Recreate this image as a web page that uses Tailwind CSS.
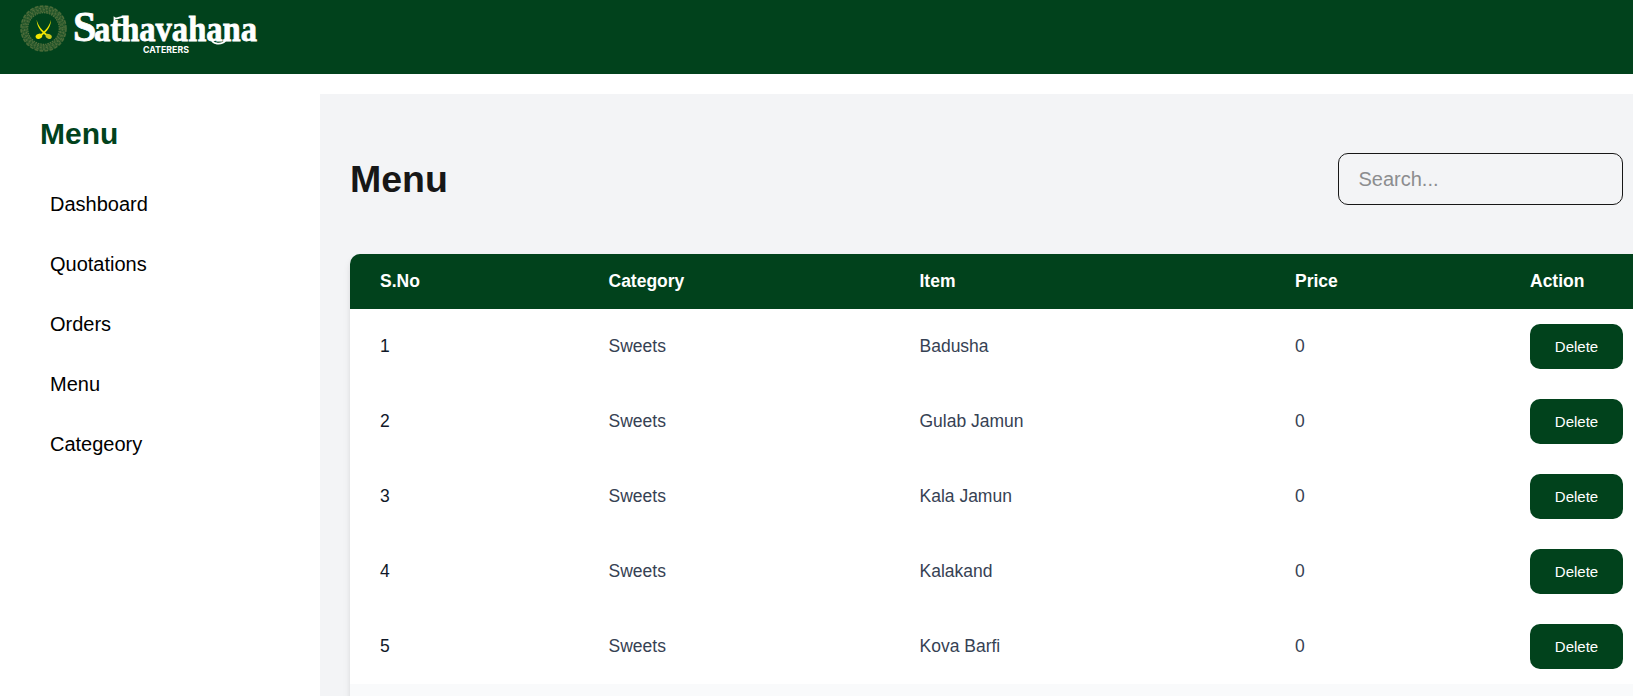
<!DOCTYPE html>
<html lang="en">
<head>
<meta charset="utf-8">
<title>Sathavahana Caterers</title>
<script src="https://cdn.jsdelivr.net/npm/@tailwindcss/browser@4"></script>
</head>
<body class="h-[696px] overflow-hidden bg-white font-['Liberation_Sans',Arial,sans-serif] text-black">
<header class="h-[74px] bg-[#01421c]">
  <svg class="block" width="280" height="74" viewBox="0 0 280 74" aria-label="Sathavahana Caterers">
    <g fill="none" stroke="#78854b">
      <circle cx="43.5" cy="28.5" r="22.6" stroke-width="1.5" stroke-dasharray="3.6 1.5" opacity=".55"/>
      <circle cx="43.5" cy="28.5" r="20.6" stroke-width="1.3" stroke-dasharray="1.3 1.9 2.4 1.2" opacity=".5"/>
      <circle cx="43.5" cy="28.5" r="19" stroke-width="1.3" stroke-dasharray="2.2 1.4 1 1.7" opacity=".5"/>
      <circle cx="43.5" cy="28.5" r="17.4" stroke-width="1.3" stroke-dasharray="1.2 1.6 2 1" opacity=".5"/>
      <circle cx="43.5" cy="28.5" r="19.4" stroke-width="6.6" opacity=".3"/>
      <circle cx="43.5" cy="28.5" r="15.8" stroke-width="1.2" stroke-dasharray="1.6 .8" opacity=".7"/>
    </g>
    <g fill="#f2e600">
      <path d="M36.7 19.8C38 26 42 30.5 48.2 35L46.8 36.3C40.5 31.5 36.8 26.5 36.7 19.8Z"/>
      <path d="M51 19.8C49.7 26 45.7 30.5 39.8 35L41.2 36.3C47.3 31.5 50.9 26.5 51 19.8Z"/>
      <ellipse cx="38.9" cy="36.3" rx="3.4" ry="2.5" transform="rotate(-18 38.9 36.3)"/>
      <ellipse cx="48.7" cy="36.3" rx="3.2" ry="2.3" transform="rotate(25 48.7 36.3)" fill="#c9c81a"/>
    </g>
    <g fill="#fff">
      <text y="40.5" font-family="Liberation Serif" font-weight="700" stroke="#fff" stroke-width=".8" font-size="36"><tspan x="73" font-size="42">S</tspan><tspan x="94" textLength="163" lengthAdjust="spacingAndGlyphs">athavahana</tspan></text>
      <path d="M114.500 27V18C117 20 120 15.500 124 17.500M112 25H126" fill="none" stroke="#fff" stroke-width="1.800"/>
      <path d="M225.500 39C225.500 42.500 221 44 217 43.500C214 43 212 41.500 212 39.500" fill="none" stroke="#fff" stroke-width="1.800" stroke-linecap="round"/>
      <text x="143" y="52.600" font-family="Inter" font-weight="700" font-size="9.2" textLength="46" lengthAdjust="spacingAndGlyphs">CATERERS</text>
    </g>
  </svg>
</header>
<div class="flex pt-5">
  <aside class="w-80 shrink-0 px-10 pt-[17px]">
    <h2 class="text-[30px] leading-[45px] font-bold text-[#01421c]">Menu</h2>
    <nav class="mt-[18px] flex flex-col px-[10px] text-[20px] leading-[60px]">
      <a>Dashboard</a>
      <a>Quotations</a>
      <a>Orders</a>
      <a>Menu</a>
      <a>Categeory</a>
    </nav>
  </aside>
  <main class="h-[602px] w-[1313px] shrink-0 overflow-hidden bg-gray-100 pl-[30px]">
    <div class="flex h-40 items-center justify-between pr-[10px] pt-[10px]">
      <h1 class="text-[37.5px] leading-[50px] font-bold text-neutral-900">Menu</h1>
      <input class="h-[52px] w-[285px] rounded-[10px] border border-neutral-900 px-[19.5px] text-[20px] placeholder:text-[#8c8d8f]" placeholder="Search...">
    </div>
    <div class="w-[1343px] overflow-hidden rounded-[10px] shadow-[0_5px_8px_-1px_rgb(0_0_0/0.1),0_2px_5px_-1px_rgb(0_0_0/0.06)]">
      <table class="w-full table-fixed border-collapse bg-white text-left text-[17.5px] leading-[25px] text-gray-700">
        <colgroup><col class="w-[229px]"><col class="w-[311px]"><col class="w-[375px]"><col class="w-[235px]"><col></colgroup>
        <thead class="bg-[#01421c] text-white">
          <tr class="h-[55px]"><th class="pl-[30px]">S.No</th><th class="pl-[29.5px]">Category</th><th class="pl-[29.5px]">Item</th><th class="pl-[30px]">Price</th><th class="pl-[30px]">Action</th></tr>
        </thead>
        <tbody>
          <tr class="h-[75px]"><td class="pl-[30px] text-gray-900">1</td><td class="pl-[29.5px]">Sweets</td><td class="pl-[29.5px]">Badusha</td><td class="pl-[30px]">0</td><td class="pl-[30px]"><button class="block h-[45px] w-[93px] rounded-[10px] bg-[#01421c] text-[15px] text-white">Delete</button></td></tr>
          <tr class="h-[75px]"><td class="pl-[30px] text-gray-900">2</td><td class="pl-[29.5px]">Sweets</td><td class="pl-[29.5px]">Gulab Jamun</td><td class="pl-[30px]">0</td><td class="pl-[30px]"><button class="block h-[45px] w-[93px] rounded-[10px] bg-[#01421c] text-[15px] text-white">Delete</button></td></tr>
          <tr class="h-[75px]"><td class="pl-[30px] text-gray-900">3</td><td class="pl-[29.5px]">Sweets</td><td class="pl-[29.5px]">Kala Jamun</td><td class="pl-[30px]">0</td><td class="pl-[30px]"><button class="block h-[45px] w-[93px] rounded-[10px] bg-[#01421c] text-[15px] text-white">Delete</button></td></tr>
          <tr class="h-[75px]"><td class="pl-[30px] text-gray-900">4</td><td class="pl-[29.5px]">Sweets</td><td class="pl-[29.5px]">Kalakand</td><td class="pl-[30px]">0</td><td class="pl-[30px]"><button class="block h-[45px] w-[93px] rounded-[10px] bg-[#01421c] text-[15px] text-white">Delete</button></td></tr>
          <tr class="h-[75px]"><td class="pl-[30px] text-gray-900">5</td><td class="pl-[29.5px]">Sweets</td><td class="pl-[29.5px]">Kova Barfi</td><td class="pl-[30px]">0</td><td class="pl-[30px]"><button class="block h-[45px] w-[93px] rounded-[10px] bg-[#01421c] text-[15px] text-white">Delete</button></td></tr>
          <tr class="h-[75px] bg-gray-50"><td colspan="5"></td></tr>
        </tbody>
      </table>
    </div>
  </main>
</div>
</body>
</html>
